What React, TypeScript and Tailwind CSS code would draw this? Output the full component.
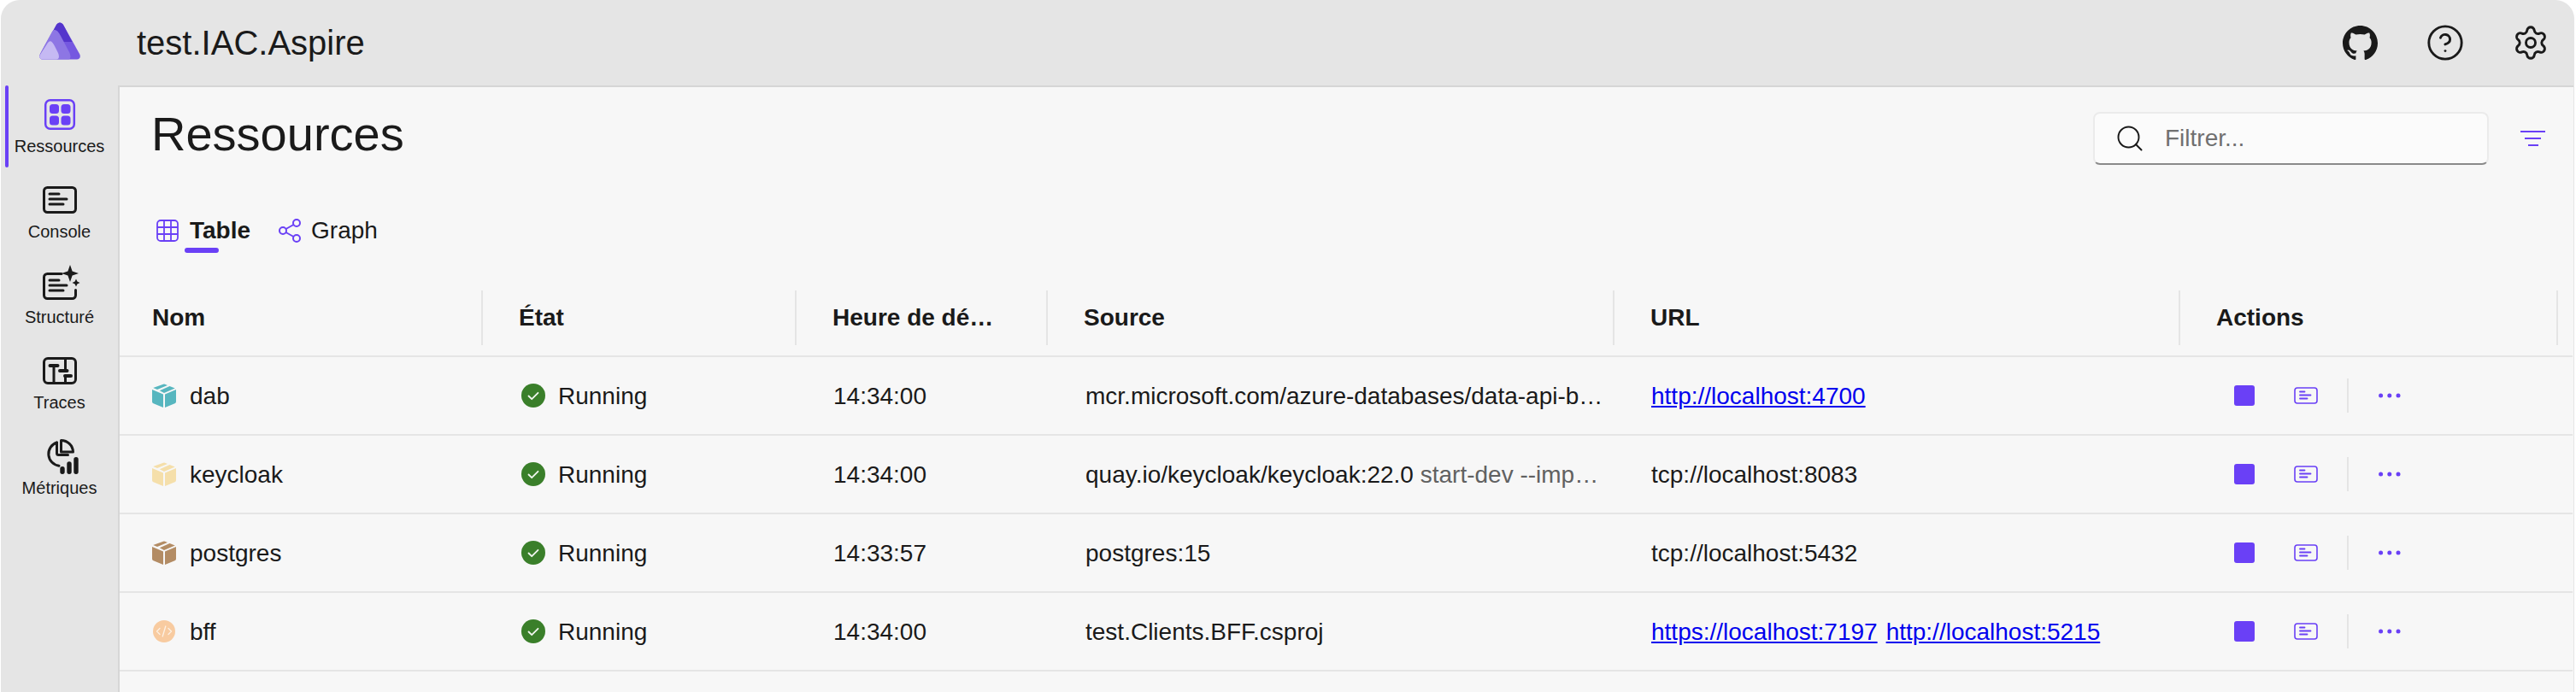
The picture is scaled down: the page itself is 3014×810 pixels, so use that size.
import { BsGithub } from "react-icons/bs";
import { CircleHelp, Search, Settings } from "lucide-react";
import type { ReactNode } from "react";

const PURPLE = "#6a40f6";

function LinesIcon() {
  return (
    <path d="M12 17h11M12 23h20M12 29h16" stroke="currentColor" strokeWidth="3" strokeLinecap="round" fill="none" />
  );
}

function Logo() {
  return (
    <svg width="48" height="44" viewBox="0 0 48 44">
      <path d="M24 0.500 C22.500 0.500 21 1.500 20 3 L1 37 C-1 41 1 43.500 4 43.500 H44 C47 43.500 49 41 47 37 L28 3 C27 1.500 25.500 0.500 24 0.500Z" fill="#7558e0" />
      <path d="M24 0.500 C22.500 0.500 21 1.500 20 3 L9.500 23 H38.500 L28 3 C27 1.500 25.500 0.500 24 0.500Z" fill="#5435cc" />
      <path d="M15 11 L3 33 C-1 41 1 43.500 4 43.500 H34 C37 43.500 37 39 35 35 L25 16 C21.500 9.500 18 7 15 11Z" fill="#8d76e4" />
      <path d="M10 24 L1 38 C-1 41 1 43.500 4 43.500 H20 C23.500 43.500 23.500 39 22 36 L18 28 C15 22 12.500 21 10 24Z" fill="#c5b9f3" />
    </svg>
  );
}

function ResourcesIcon() {
  return (
    <svg width="48" height="48" viewBox="0 0 48 48" fill={PURPLE}>
      <rect x="7.200" y="7.200" width="33.600" height="33.600" rx="5.500" fill="none" stroke={PURPLE} strokeWidth="2.500" />
      <rect x="12" y="12" width="11" height="11" rx="3.500" />
      <rect x="25.500" y="12" width="11" height="11" rx="3.500" />
      <rect x="12" y="25.500" width="11" height="11" rx="3.500" />
      <rect x="25.500" y="25.500" width="11" height="11" rx="3.500" />
    </svg>
  );
}

function ConsoleIcon() {
  return (
    <svg width="48" height="48" viewBox="0 0 48 48" className="text-[#1a1a1a]">
      <rect x="5.500" y="9.500" width="37" height="29" rx="4" fill="none" stroke="currentColor" strokeWidth="3" />
      <LinesIcon />
    </svg>
  );
}

function StructuredIcon() {
  return (
    <svg width="48" height="48" viewBox="0 0 48 48" className="text-[#1a1a1a]">
      <path d="M26 10.500H9.500a4 4 0 0 0-4 4v21a4 4 0 0 0 4 4h29a4 4 0 0 0 4-4v-6" fill="none" stroke="currentColor" strokeWidth="3" strokeLinecap="round" />
      <g transform="translate(0 1)">
        <LinesIcon />
      </g>
      <path d="M36 0 L38.600 7.400 L46 10 L38.600 12.600 L36 20 L33.400 12.600 L26 10 L33.400 7.400Z" fill="currentColor" />
      <path d="M43 16.500 L44.400 19.600 L47.500 21 L44.400 22.400 L43 25.500 L41.600 22.400 L38.500 21 L41.600 19.600Z" fill="currentColor" />
    </svg>
  );
}

function TracesIcon() {
  return (
    <svg width="48" height="48" viewBox="0 0 48 48" className="text-[#1a1a1a]" fill="none" stroke="currentColor" strokeWidth="3" strokeLinecap="round">
      <rect x="5.500" y="9.500" width="37" height="29" rx="4.500" />
      <path d="M17 18v21M30.500 9v15M30.500 30v9" strokeLinecap="butt" />
      <path d="M12.500 18h9M24 24h8.500M30 30h7" strokeWidth="4" />
    </svg>
  );
}

function MetricsIcon() {
  return (
    <svg width="48" height="48" viewBox="0 0 48 48" className="text-[#1a1a1a]" fill="none" stroke="currentColor" strokeWidth="3" strokeLinecap="round" strokeLinejoin="round">
      <path d="M20.500 8A14 14 0 0 0 23 35.200" />
      <path d="M20.500 8v12.500a2 2 0 0 0 2 2h11" />
      <path d="M25.500 5.500V19h14A14 14 0 0 0 25.500 5.500Z" />
      <path d="M27 38.700v3.600M35 33v9.300M43 27.700v14.600" strokeWidth="5.400" />
    </svg>
  );
}

function CubeIcon({ color }: { color: string }) {
  return (
    <svg width="28" height="28" viewBox="0 0 28 28" fill={color}>
      <path d="M13 .3a2.400 2.400 0 0 1 2 0l3 1.200-12 5-4.800-2ZM20.500 2.500 26.800 5 14 10.600 8.800 7.900Z" transform="translate(0 .4)" />
      <path d="M0 7l13 5.600V28L1.500 23.200A2.200 2.200 0 0 1 0 21Z" />
      <path d="M28 7 15 12.600V28l11.500-4.800A2.200 2.200 0 0 0 28 21Z" />
    </svg>
  );
}

function CodeIcon() {
  return (
    <svg width="28" height="28" viewBox="0 0 28 28">
      <circle cx="14" cy="14" r="13" fill="#f8cba0" />
      <path d="M9 10.500 5.500 14 9 17.500M19 10.500l3.500 3.500-3.500 3.500M15.800 8l-3.600 12" fill="none" stroke="#fdf1e4" strokeWidth="1.300" strokeLinecap="round" strokeLinejoin="round" />
    </svg>
  );
}

function StatusIcon() {
  return (
    <svg width="28" height="28" viewBox="0 0 28 28" className="shrink-0">
      <circle cx="14" cy="14" r="14" fill="#3a7f2a" />
      <path d="M8.500 14.500l3.700 3.700 7.300-7.400" fill="none" stroke="#f2f7f0" strokeWidth="1.800" strokeLinecap="round" strokeLinejoin="round" />
    </svg>
  );
}

function StopIcon() {
  return <div className="h-6 w-6 rounded-[3px] bg-[#6a40f6]" />;
}

function LogsIcon() {
  return (
    <svg width="28" height="20" viewBox="0 0 28 20" fill="none" stroke={PURPLE} strokeLinecap="round">
      <rect x="1" y="1" width="26" height="18" rx="3" strokeWidth="1.600" />
      <path d="M7 5.500h5.500M7 9.500h12.500M7 13.500h8.500" strokeWidth="1.800" />
    </svg>
  );
}

function DotsIcon() {
  return (
    <svg width="26" height="6" viewBox="0 0 26 6" fill={PURPLE}>
      <circle cx="2.600" cy="3" r="2.500" />
      <circle cx="12.800" cy="3" r="2.500" />
      <circle cx="23" cy="3" r="2.500" />
    </svg>
  );
}

const navItems = [
  { label: "Ressources", icon: <ResourcesIcon />, active: true },
  { label: "Console", icon: <ConsoleIcon /> },
  { label: "Structuré", icon: <StructuredIcon /> },
  { label: "Traces", icon: <TracesIcon /> },
  { label: "Métriques", icon: <MetricsIcon /> },
];

const link = (href: string) => (
  <a href="#" className="text-[#0000ee] underline">
    {href}
  </a>
);

const rows: { name: string; icon: ReactNode; time: string; source: ReactNode; url: ReactNode }[] = [
  {
    name: "dab",
    icon: <CubeIcon color="#57b6bf" />,
    time: "14:34:00",
    source: "mcr.microsoft.com/azure-databases/data-api-b…",
    url: link("http://localhost:4700"),
  },
  {
    name: "keycloak",
    icon: <CubeIcon color="#f5dfaa" />,
    time: "14:34:00",
    source: (
      <>
        quay.io/keycloak/keycloak:22.0 <span className="text-[#616161]">start-dev --imp…</span>
      </>
    ),
    url: "tcp://localhost:8083",
  },
  {
    name: "postgres",
    icon: <CubeIcon color="#b38c64" />,
    time: "14:33:57",
    source: "postgres:15",
    url: "tcp://localhost:5432",
  },
  {
    name: "bff",
    icon: <CodeIcon />,
    time: "14:34:00",
    source: "test.Clients.BFF.csproj",
    url: (
      <span className="flex gap-[10px]">
        {link("https://localhost:7197")}
        {link("http://localhost:5215")}
      </span>
    ),
  },
];

const headers = ["Nom", "État", "Heure de dé…", "Source", "URL", "Actions"];

export default function App() {
  return (
    <div className="h-[810px] w-[3014px] overflow-hidden bg-white pl-px text-[28px] text-[#1a1a1a] [font-family:'Liberation_Sans',Arial,sans-serif]">
      <div className="flex h-full w-[3011px] flex-col overflow-hidden rounded-t-[22px] bg-[#e5e5e5]">
        <header className="flex h-[100px] shrink-0 items-center">
          <div className="flex w-[138px] justify-center pb-[4px]">
            <Logo />
          </div>
          <div className="ml-[21px] text-[40px]">test.IAC.Aspire</div>
          <div className="ml-auto flex items-center pr-px">
            <div className="flex w-[100px] justify-center">
              <BsGithub size={41} />
            </div>
            <div className="flex w-[100px] justify-center">
              <CircleHelp size={46} strokeWidth={1.500} />
            </div>
            <div className="flex w-[100px] justify-center">
              <Settings size={44} strokeWidth={1.600} />
            </div>
          </div>
        </header>
        <div className="flex min-h-0 flex-1">
          <nav className="w-[137px] shrink-0">
            {navItems.map((item) => (
              <div key={item.label} className="relative flex h-[100px] flex-col items-center pt-[10px]">
                {item.active && <span className="absolute left-[5px] top-0 h-[96px] w-[4px] rounded-full bg-[#6a40f6]" />}
                {item.icon}
                <span className="mt-px text-[20px] leading-[24px]">{item.label}</span>
              </div>
            ))}
          </nav>
          <main className="w-[2873px] border-l-2 border-t-2 border-[#d6d6d6] bg-[#f7f7f7] pr-px">
            <div className="flex items-start justify-between pl-[37px] pr-[32px] pt-[29px]">
              <h1 className="-mt-[2px] text-[56px] leading-[56px]">Ressources</h1>
              <div className="flex items-center gap-[37px]">
                <div className="flex h-[62px] w-[463px] items-center gap-[23px] rounded-[8px] border-2 border-[#ebebeb] border-b-[#8a8a8a] bg-[#fbfbfb] pl-[23px]">
                  <Search size={36} strokeWidth={1.300} className="text-[#1a1a1a]" />
                  <span className="text-[#707070]">Filtrer...</span>
                </div>
                <svg width="29" height="20" viewBox="0 0 29 20" fill="none" stroke={PURPLE} strokeWidth="2">
                  <path d="M0 2h29M5 10h19M9 18h12" />
                </svg>
              </div>
            </div>
            <div className="mt-[47px] flex h-[60px] items-center pl-[43px]">
              <div className="relative flex items-center gap-[13px] font-bold">
                <svg width="26" height="26" viewBox="0 0 26 26" fill="none" stroke={PURPLE} strokeWidth="1.800">
                  <rect x="1" y="1" width="24" height="24" rx="4" />
                  <path d="M9 1v24M17 1v24M1 9h24M1 17h24" />
                </svg>
                Table
                <span className="absolute left-[33px] top-[41px] h-[6px] w-[40px] rounded-full bg-[#6a40f6]" />
              </div>
              <div className="ml-[33px] flex items-center gap-[12px]">
                <svg width="26" height="28" viewBox="0 0 26 28" fill="none" stroke={PURPLE} strokeWidth="2">
                  <circle cx="21" cy="5" r="4" />
                  <circle cx="5" cy="14" r="4" />
                  <circle cx="21" cy="23" r="4" />
                  <path d="M8.500 12 17.500 7M8.500 16l9 5" />
                </svg>
                Graph
              </div>
            </div>
            <div className="mt-[40px]">
              <div className="grid h-[78px] grid-cols-[423px_367px_294px_663px_662px_442px_19px] border-b-2 border-[#e5e5e5] pb-[12px] font-bold">
                {headers.map((header, index) => (
                  <div
                    key={header}
                    className={
                      index === 0
                        ? "flex items-center pl-[38px]"
                        : "flex items-center whitespace-nowrap border-l-2 border-[#e5e5e5] pl-[42px]"
                    }
                  >
                    {header}
                  </div>
                ))}
                <div className="border-l-2 border-[#e5e5e5]" />
              </div>
              {rows.map((row) => (
                <div
                  key={row.name}
                  className="grid h-[92px] grid-cols-[423px_367px_294px_663px_662px_442px_19px] items-center border-b-2 border-[#e5e5e5]"
                >
                  <div className="flex items-center gap-[16px] pl-[38px]">
                    {row.icon}
                    <span className="pt-[2px]">{row.name}</span>
                  </div>
                  <div className="flex items-center gap-[15px] pl-[47px]">
                    <StatusIcon />
                    <span className="pt-[2px]">Running</span>
                  </div>
                  <div className="pl-[45px] pt-[2px]">{row.time}</div>
                  <div className="whitespace-nowrap pl-[46px] pt-[2px]">{row.source}</div>
                  <div className="pl-[45px] pt-[2px]">{row.url}</div>
                  <div className="flex items-center pl-[65px]">
                    <StopIcon />
                    <div className="ml-[46px]">
                      <LogsIcon />
                    </div>
                    <div className="ml-[34px] h-[40px] w-[2px] bg-[#e5e5e5]" />
                    <div className="ml-[35px]">
                      <DotsIcon />
                    </div>
                  </div>
                </div>
              ))}
            </div>
          </main>
        </div>
      </div>
    </div>
  );
}
